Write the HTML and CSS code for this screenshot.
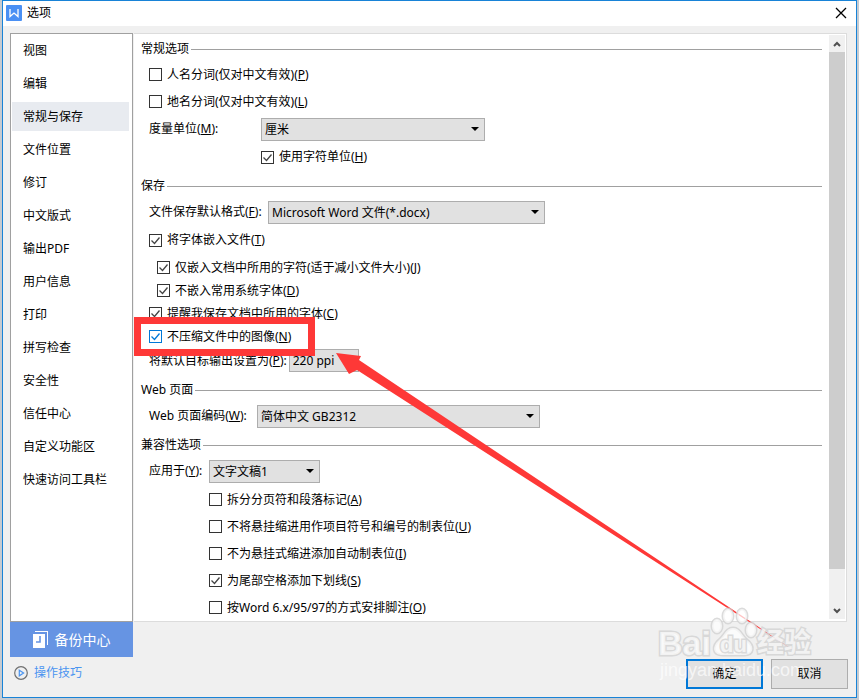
FILE: index.html
```html
<!DOCTYPE html>
<html lang="zh-CN">
<head>
    <meta charset="UTF-8">
    <meta name="viewport" content="width=device-width, initial-scale=1.0">
    <title>选项</title>
    <link rel="stylesheet" href="styles.css">
</head>
<body>
<div class="dialog">
    <header class="title-bar">
        <svg class="app-icon" width="16" height="16" viewBox="0 0 16 16">
            <rect width="16" height="16" rx="1" fill="#4a90f4"/>
            <path d="M4 4v7.5l4-3.5 4 3.5V4" fill="none" stroke="#fff" stroke-width="1.3"/>
        </svg>
        <h1>选项</h1>
        <button class="close" type="button" aria-label="关闭">
            <svg width="12" height="12" viewBox="0 0 12 12"><path d="M1 1l10 10M11 1L1 11" stroke="#000" stroke-width="1.3"/></svg>
        </button>
    </header>

    <form class="content">
        <nav class="tabs">
            <a href="#view">视图</a>
            <a href="#edit">编辑</a>
            <a href="#general" class="active">常规与保存</a>
            <a href="#location">文件位置</a>
            <a href="#revision">修订</a>
            <a href="#chinese">中文版式</a>
            <a href="#pdf">输出PDF</a>
            <a href="#user">用户信息</a>
            <a href="#print">打印</a>
            <a href="#spelling">拼写检查</a>
            <a href="#security">安全性</a>
            <a href="#trust">信任中心</a>
            <a href="#ribbon">自定义功能区</a>
            <a href="#toolbar">快速访问工具栏</a>
        </nav>

        <div class="panel">
            <div class="options">
                <section>
                    <h2>常规选项</h2>
                    <div class="row"><label><input type="checkbox">人名分词(仅对中文有效)(<u>P</u>)</label></div>
                    <div class="row"><label><input type="checkbox">地名分词(仅对中文有效)(<u>L</u>)</label></div>
                    <div class="row field">
                        <label class="unit-label" for="unit">度量单位(<u>M</u>):</label>
                        <select id="unit" class="unit"><option>厘米</option></select>
                    </div>
                    <div class="row field indent-unit"><label><input type="checkbox" checked>使用字符单位(<u>H</u>)</label></div>
                </section>

                <section>
                    <h2>保存</h2>
                    <div class="row field">
                        <label class="format-label" for="format">文件保存默认格式(<u>F</u>):</label>
                        <select id="format" class="format"><option>Microsoft Word 文件(*.docx)</option></select>
                    </div>
                    <div class="row field"><label><input type="checkbox" checked>将字体嵌入文件(<u>T</u>)</label></div>
                    <div class="tight">
                        <div class="row indent"><label><input type="checkbox" checked>仅嵌入文档中所用的字符(适于减小文件大小)(<u>J</u>)</label></div>
                        <div class="row indent"><label><input type="checkbox" checked>不嵌入常用系统字体(<u>D</u>)</label></div>
                        <div class="row"><label><input type="checkbox" checked>提醒我保存文档中所用的字体(<u>C</u>)</label></div>
                        <div class="row"><label><input class="focus" type="checkbox" checked>不压缩文件中的图像(<u>N</u>)</label></div>
                        <div class="row">
                            <label for="ppi">将默认目标输出设置为(<u>P</u>):</label>
                            <select id="ppi" class="ppi"><option>220 ppi</option></select>
                        </div>
                    </div>
                </section>

                <section>
                    <h2>Web 页面</h2>
                    <div class="row field">
                        <label class="encoding-label" for="encoding">Web 页面编码(<u>W</u>):</label>
                        <select id="encoding" class="encoding"><option>简体中文 GB2312</option></select>
                    </div>
                </section>

                <section>
                    <h2>兼容性选项</h2>
                    <div class="row field">
                        <label class="apply-label" for="apply">应用于(<u>Y</u>):</label>
                        <select id="apply" class="apply"><option>文字文稿1</option></select>
                    </div>
                    <div class="compat">
                        <div class="row"><label><input type="checkbox">拆分分页符和段落标记(<u>A</u>)</label></div>
                        <div class="row"><label><input type="checkbox">不将悬挂缩进用作项目符号和编号的制表位(<u>U</u>)</label></div>
                        <div class="row"><label><input type="checkbox">不为悬挂式缩进添加自动制表位(<u>I</u>)</label></div>
                        <div class="row"><label><input type="checkbox" checked>为尾部空格添加下划线(<u>S</u>)</label></div>
                        <div class="row"><label><input type="checkbox">按Word 6.x/95/97的方式安排脚注(<u>O</u>)</label></div>
                    </div>
                </section>
            </div>

            <div class="scrollbar">
                <button type="button" aria-label="向上滚动">
                    <svg width="8" height="6" viewBox="0 0 8 6"><path d="M1 5l3-3 3 3" fill="none" stroke="#505050" stroke-width="2"/></svg>
                </button>
                <div class="track"><div class="thumb"></div></div>
                <button type="button" aria-label="向下滚动">
                    <svg width="8" height="6" viewBox="0 0 8 6"><path d="M1 1l3 3 3-3" fill="none" stroke="#505050" stroke-width="2"/></svg>
                </button>
            </div>
        </div>

        <div class="side-actions">
            <button class="backup" type="button">
                <svg width="16" height="17" viewBox="0 0 16 17">
                    <path d="M2 0h13v14h-1V1H2z" fill="#fff"/>
                    <path d="M0 3h12v14H0z" fill="#fff"/>
                    <path d="M7 5v6H3" fill="none" stroke="#6694e3" stroke-width="1.6"/>
                </svg>
                备份中心
            </button>
            <a class="tips" href="#tips">
                <svg width="14" height="14" viewBox="0 0 14 14">
                    <circle cx="7" cy="7" r="6.3" fill="none" stroke="#707070" stroke-width="1.2"/>
                    <path d="M5.3 4.2L9.6 7l-4.3 2.8z" fill="none" stroke="#4a94f0" stroke-width="1.2"/>
                </svg>
                操作技巧
            </a>
        </div>

        <div class="buttons">
            <button class="ok" type="submit">确定</button>
            <button type="button">取消</button>
        </div>
    </form>
</div>

<!-- callout and watermark drawn over the dialog -->
<svg class="overlay" width="859" height="700" viewBox="0 0 859 700">
    <rect x="137.500" y="320.500" width="174" height="32" fill="none" stroke="#fe3837" stroke-width="7"/>
    <path d="M336 353L361 356 359 360 796 652 357 370 349 374z" fill="#fe3837"/>
    <g class="watermark">
        <text x="658" y="655" font-size="34" font-weight="bold">Bai</text>
        <ellipse cx="717" cy="626" rx="5" ry="7"/>
        <ellipse cx="728" cy="616" rx="5" ry="7"/>
        <ellipse cx="742" cy="616" rx="5" ry="7"/>
        <ellipse cx="751" cy="630" rx="5" ry="7"/>
        <path d="M733 628c7 0 9 8 14 12 8 6 7 15-3 15h-21c-11 0-11-9-4-15 5-4 7-12 14-12z"/>
        <text class="du" x="720" y="652" font-size="22" font-weight="bold">du</text>
        <text x="757" y="652" font-size="27" font-weight="bold">经验</text>
        <text class="url" x="660" y="676" font-size="18">jingyan.baidu.com</text>
    </g>
</svg>
</body>
</html>
```
FILE: styles.css
```css
* {
  box-sizing: border-box;
}

body {
  position: relative;
  display: flex;
  min-height: 100vh;
  margin: 0;
  padding: 0 2px 2px;
  background: #c6cbd1;
  color: #000;
  font-family: "Noto Sans", "Noto Sans CJK SC", sans-serif;
  font-size: 12px;
  line-height: 18px;
}

button, input, select {
  margin: 0;
  font: inherit;
  color: inherit;
}

button {
  border: none;
  padding: 0;
}

a {
  color: inherit;
  text-decoration: none;
}

u {
  text-underline-offset: 1px;
}

.dialog {
  flex: 1;
  display: flex;
  flex-direction: column;
  background: #f0f0f0;
  border: 1px solid #1883d7;
}

.title-bar {
  display: flex;
  align-items: center;
  gap: 5px;
  height: 25px;
  padding: 0 9px 1px 3px;
  background: #fff;
}

.title-bar h1 {
  flex: 1;
  margin: 0;
  font-size: 12px;
  font-weight: normal;
}

.close {
  display: flex;
  background: none;
}

.content {
  flex: 1;
  display: grid;
  grid-template-columns: 123px 1fr;
  grid-template-rows: auto 1fr;
  column-gap: 1px;
  padding: 7px 8px 0 7px;
}

.tabs {
  display: flex;
  flex-direction: column;
  gap: 4px;
  padding: 2px 3px 2px 1px;
  background: #fff;
  border: 1px solid #a0a0a0;
}

.tabs a {
  height: 29px;
  padding-left: 11px;
  line-height: 30px;
}

.tabs .active {
  background: #e8ebf0;
}

.panel {
  display: flex;
  margin-right: 1px;
  background: #fff;
  border: 1px solid #dcdcdc;
  border-left: none;
}

.options {
  flex: 1;
  padding: 3px 7px 0;
}

section + section {
  margin-top: 3px;
}

h2 {
  display: flex;
  align-items: center;
  gap: 2px;
  height: 24px;
  margin: 0;
  font-size: 12px;
  font-weight: normal;
}

h2::after {
  content: "";
  flex: 1;
  height: 1px;
  background: #a0a0a0;
}

.row {
  display: flex;
  align-items: center;
  gap: 2px;
  height: 27px;
  padding-left: 8px;
  white-space: nowrap;
}

.field {
  height: 28px;
}

.row label {
  display: flex;
  align-items: center;
}

.unit-label {
  width: 110px;
}

.format-label {
  width: 117px;
}

.encoding-label {
  width: 106px;
}

.apply-label {
  width: 58px;
}

.indent {
  padding-left: 16px;
}

.indent-unit {
  padding-left: 120px;
}

.compat {
  padding: 1px 0 0 60px;
}

.tight {
  padding: 2px 0;
}

.tight .row {
  height: 23px;
}

.tight .row:last-child {
  height: 25px;
}

input[type="checkbox"] {
  appearance: none;
  width: 13px;
  height: 13px;
  margin-right: 5px;
  border: 1px solid #333;
  background: #fff;
}

input[type="checkbox"]:checked {
  background: #fff url("data:image/svg+xml,%3Csvg xmlns='http://www.w3.org/2000/svg' viewBox='0 0 11 11'%3E%3Cpath d='M1.500 5.500l3 3 5-6' fill='none' stroke='%23444' stroke-width='1.300'/%3E%3C/svg%3E");
}

input[type="checkbox"].focus {
  border-color: #0078d7;
  background-image: url("data:image/svg+xml,%3Csvg xmlns='http://www.w3.org/2000/svg' viewBox='0 0 11 11'%3E%3Cpath d='M1.500 5.500l3 3 5-6' fill='none' stroke='%230078d7' stroke-width='1.300'/%3E%3C/svg%3E");
}

select {
  appearance: none;
  height: 23px;
  padding: 1px 20px 0 3px;
  border: 1px solid #adadad;
  border-radius: 0;
  background: #e1e1e1 url("data:image/svg+xml,%3Csvg xmlns='http://www.w3.org/2000/svg' width='8' height='4'%3E%3Cpath d='M0 0h8L4 4z'/%3E%3C/svg%3E") no-repeat right 5px center;
}

.unit {
  width: 224px;
}

.format {
  width: 277px;
}

.ppi {
  width: 70px;
}

.encoding {
  width: 283px;
}

.apply {
  width: 111px;
}

.scrollbar {
  display: flex;
  flex-direction: column;
  width: 17px;
  padding: 1px 1px 2px 0;
}

.scrollbar button {
  display: flex;
  align-items: center;
  justify-content: center;
  height: 17px;
  background: #f0f0f0;
}

.track {
  flex: 1;
  background: #f0f0f0;
}

.thumb {
  height: 94%;
  background: #cdcdcd;
}

.backup {
  display: flex;
  align-items: center;
  justify-content: center;
  gap: 6px;
  width: 100%;
  height: 35px;
  background: #6694e3;
  color: #fff;
  font-size: 14px;
}

.tips {
  display: flex;
  align-items: center;
  gap: 6px;
  padding: 7px 4px;
  color: #4a94f0;
}

.buttons {
  display: flex;
  justify-content: flex-end;
  align-items: flex-start;
  gap: 8px;
  padding-top: 37px;
}

.buttons button {
  width: 77px;
  height: 30px;
  background: #e1e1e1;
  border: 1px solid #adadad;
}

.buttons .ok {
  border: 2px solid #0078d7;
}

.overlay {
  position: absolute;
  top: 0;
  left: 0;
  pointer-events: none;
}

.watermark {
  fill: #fff;
  fill-opacity: 0.7;
  stroke: #d2d2d2;
  stroke-opacity: 0.8;
  stroke-width: 3px;
  paint-order: stroke;
  font-family: "Liberation Sans", "Noto Sans CJK SC", sans-serif;
}

.watermark .url {
  stroke: none;
}
```
